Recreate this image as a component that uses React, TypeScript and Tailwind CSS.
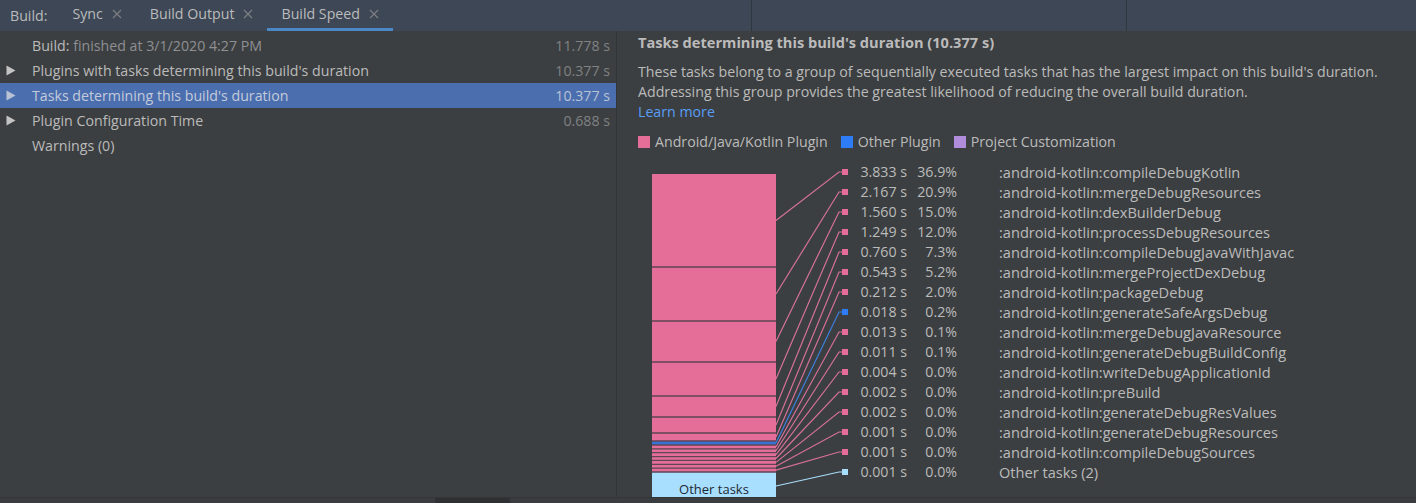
import React from 'react'

type Kind = 'android' | 'other' | 'rest'

type Task = { time: string; pct: string; name: string; kind: Kind }

const tasks: Task[] = [
  { time: '3.833 s', pct: '36.9%', name: ':android-kotlin:compileDebugKotlin', kind: 'android' },
  { time: '2.167 s', pct: '20.9%', name: ':android-kotlin:mergeDebugResources', kind: 'android' },
  { time: '1.560 s', pct: '15.0%', name: ':android-kotlin:dexBuilderDebug', kind: 'android' },
  { time: '1.249 s', pct: '12.0%', name: ':android-kotlin:processDebugResources', kind: 'android' },
  { time: '0.760 s', pct: '7.3%', name: ':android-kotlin:compileDebugJavaWithJavac', kind: 'android' },
  { time: '0.543 s', pct: '5.2%', name: ':android-kotlin:mergeProjectDexDebug', kind: 'android' },
  { time: '0.212 s', pct: '2.0%', name: ':android-kotlin:packageDebug', kind: 'android' },
  { time: '0.018 s', pct: '0.2%', name: ':android-kotlin:generateSafeArgsDebug', kind: 'other' },
  { time: '0.013 s', pct: '0.1%', name: ':android-kotlin:mergeDebugJavaResource', kind: 'android' },
  { time: '0.011 s', pct: '0.1%', name: ':android-kotlin:generateDebugBuildConfig', kind: 'android' },
  { time: '0.004 s', pct: '0.0%', name: ':android-kotlin:writeDebugApplicationId', kind: 'android' },
  { time: '0.002 s', pct: '0.0%', name: ':android-kotlin:preBuild', kind: 'android' },
  { time: '0.002 s', pct: '0.0%', name: ':android-kotlin:generateDebugResValues', kind: 'android' },
  { time: '0.001 s', pct: '0.0%', name: ':android-kotlin:generateDebugResources', kind: 'android' },
  { time: '0.001 s', pct: '0.0%', name: ':android-kotlin:compileDebugSources', kind: 'android' },
  { time: '0.001 s', pct: '0.0%', name: 'Other tasks (2)', kind: 'rest' },
]

// segment boundaries of the stacked bar, in chart coordinates
const bounds = [12, 105, 159, 200, 234, 255, 271, 279, 283, 286.9, 290.7, 294.6, 298.4, 302.3, 306.1, 310, 335]

const fill: Record<Kind, string> = { android: '#e56e98', other: '#3574d6', rest: '#a8defe' }
const stroke: Record<Kind, string> = { android: '#d5709a', other: '#3d7fe0', rest: '#a8defe' }
const square: Record<Kind, string> = { android: '#e56e98', other: '#2f7df6', rest: '#a8defe' }

function CloseIcon() {
  return (
    <svg width="10" height="10" viewBox="0 0 10 10" className="shrink-0">
      <path d="M1 1 L9 9 M9 1 L1 9" stroke="#7d7f82" strokeWidth="1.2" />
    </svg>
  )
}

function Arrow({ color }: { color: string }) {
  return (
    <svg width="10" height="11" viewBox="0 0 10 11">
      <path d="M0.5 0.5 L9.5 5.5 L0.5 10.5 Z" fill={color} />
    </svg>
  )
}

function Tab({ label, active }: { label: string; active?: boolean }) {
  return (
    <div
      className={
        'flex h-full items-center gap-[9px] pl-[14px] pr-[14px] border-b-[3px] ' +
        (active ? 'border-[#4a88c7]' : 'border-transparent')
      }
    >
      <span>{label}</span>
      <CloseIcon />
    </div>
  )
}

function TreeRow({
  label,
  time,
  arrow,
  selected,
}: {
  label: React.ReactNode
  time?: string
  arrow?: boolean
  selected?: boolean
}) {
  return (
    <div className={'flex h-[25px] items-center pl-[6px] pr-[6px] ' + (selected ? 'bg-[#4b6eaf]' : '')}>
      <span className="flex w-[26px] items-center">{arrow && <Arrow color={selected ? '#b9c3d6' : '#c4c4c4'} />}</span>
      <span className={'flex-1 whitespace-nowrap ' + (selected ? 'text-[#c3cbdb]' : 'text-[#bbbbbb]')}>{label}</span>
      {time && <span className={selected ? 'text-[#b8c2d5]' : 'text-[#7f8183]'}>{time}</span>}
    </div>
  )
}

function Chart() {
  return (
    <div className="flex h-[335px] mt-[10px]">
      <svg width="212" height="335" viewBox="0 0 212 335" className="shrink-0">
        {tasks.map((t, i) => (
          <rect key={'r' + i} x="14" y={bounds[i]} width="124" height={bounds[i + 1] - bounds[i]} fill={fill[t.kind]} />
        ))}
        {bounds.slice(1, 16).map((b, i) => (
          <line key={'s' + i} x1="14" x2="138" y1={b} y2={b} stroke="#5e4653" strokeWidth="1.3" />
        ))}
        {tasks.map((t, i) => {
          const mid = i === 15 ? 324 : (bounds[i] + bounds[i + 1]) / 2
          const rc = 10 + i * 20
          return (
            <g key={'l' + i}>
              <polyline points={`138,${mid} 201,${rc} 205,${rc}`} fill="none" stroke={stroke[t.kind]} strokeWidth="1.2" />
              <rect x="204" y={rc - 3} width="6" height="6" fill={square[t.kind]} />
            </g>
          )
        })}
        <text x="76" y="332" textAnchor="middle" fontSize="13" fill="#1d2933" fontFamily="'Open Sans', sans-serif">
          Other tasks
        </text>
      </svg>
      <div className="flex flex-col">
        {tasks.map((t, i) => (
          <div key={i} className="flex h-[20px] items-center whitespace-nowrap text-[#bbbbbb]">
            <span className="w-[57px] text-right">{t.time}</span>
            <span className="w-[50px] text-right">{t.pct}</span>
            <span className="ml-[42px] text-[14.6px]">{t.name}</span>
          </div>
        ))}
      </div>
    </div>
  )
}

export default function App() {
  return (
    <div className="flex h-screen w-full flex-col overflow-hidden bg-[#3c3f41] text-[14.2px] text-[#bbbbbb] font-['Open_Sans',sans-serif]">
      {/* Tool window header */}
      <div className="flex h-[31px] shrink-0 items-stretch bg-[#3d4756]">
        <div className="flex items-center pl-[10px] pr-[11px]">Build:</div>
        <Tab label="Sync" />
        <Tab label="Build Output" />
        <Tab label="Build Speed" active />
        <div className="flex-1 border-r border-[#2f3741]" />
        <div className="w-[375px] border-r border-[#2f3741]" />
        <div className="w-[289px]" />
      </div>

      <div className="flex min-h-0 flex-1">
        {/* Tree */}
        <div className="w-[617px] shrink-0 border-r border-[#323435] pt-[2px]">
          <TreeRow
            label={
              <>
                Build: <span className="text-[#8e9093]">finished at 3/1/2020 4:27 PM</span>
              </>
            }
            time="11.778 s"
          />
          <TreeRow label="Plugins with tasks determining this build's duration" time="10.377 s" arrow />
          <TreeRow label="Tasks determining this build's duration" time="10.377 s" arrow selected />
          <TreeRow label="Plugin Configuration Time" time="0.688 s" arrow />
          <TreeRow label="Warnings (0)" />
        </div>

        {/* Details */}
        <div className="min-w-0 flex-1 overflow-hidden pl-[21px] pt-[1px] leading-[20px]">
          <div className="font-bold text-[14.6px]">Tasks determining this build's duration (10.377 s)</div>
          <div className="mt-[10px] whitespace-nowrap">
            <div>These tasks belong to a group of sequentially executed tasks that has the largest impact on this build's duration.</div>
            <div>Addressing this group provides the greatest likelihood of reducing the overall build duration.</div>
            <div className="text-[#589df6]">Learn more</div>
          </div>
          <div className="mt-[10px] flex h-[20px] items-center whitespace-nowrap">
            <span className="mr-[5px] h-[12px] w-[12px] bg-[#e56e98]" />
            <span>Android/Java/Kotlin Plugin</span>
            <span className="ml-[13px] mr-[5px] h-[12px] w-[12px] bg-[#2f7df6]" />
            <span>Other Plugin</span>
            <span className="ml-[13px] mr-[5px] h-[12px] w-[12px] bg-[#b08cda]" />
            <span>Project Customization</span>
          </div>
          <Chart />
        </div>
      </div>

      {/* Horizontal scrollbar */}
      <div className="h-[6px] shrink-0 border-t border-[#333537] bg-[#3a3d3f] pl-[435px]">
        <div className="h-full w-[75px] bg-[#2e3032]" />
      </div>
    </div>
  )
}
